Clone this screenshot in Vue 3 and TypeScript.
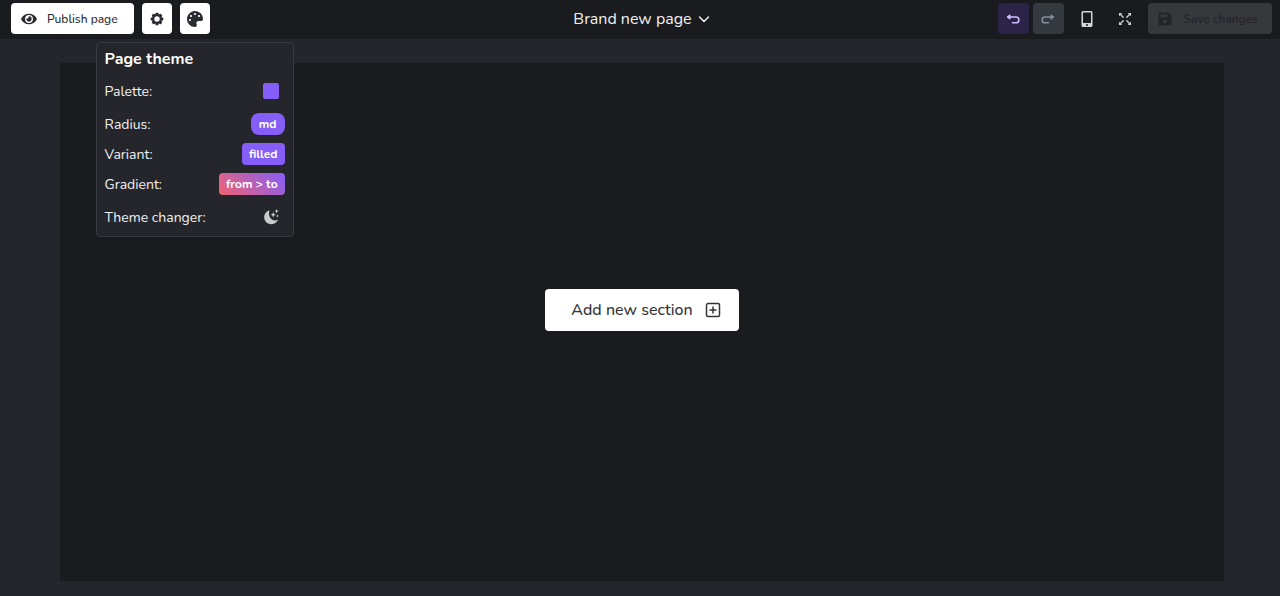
<script setup lang="ts">
import { ref } from 'vue'

const pageName = ref('Brand new page')
const themeOpen = ref(true)

const options = [
  { label: 'Radius:', value: 'md', kind: 'round' },
  { label: 'Variant:', value: 'filled', kind: 'filled' },
  { label: 'Gradient:', value: 'from > to', kind: 'gradient' },
]
</script>

<template>
  <div class="editor">
    <header class="topbar">
      <div class="group">
        <button class="btn publish" type="button">
          <svg class="eye" viewBox="0 0 576 512" aria-hidden="true">
            <path fill="currentColor" d="M572.5 241.400C518.300 135.600 410.900 64 288 64S57.700 135.600 3.500 241.400a32.350 32.350 0 0 0 0 29.200C57.700 376.400 165.100 448 288 448s230.300-71.600 284.500-177.400a32.350 32.350 0 0 0 0-29.200zM288 400a144 144 0 1 1 144-144 143.930 143.930 0 0 1-144 144zm0-240a95.300 95.300 0 0 0-25.300 3.800 47.850 47.850 0 0 1-66.900 66.900A95.800 95.800 0 1 0 288 160z" />
          </svg>
          <span>Publish page</span>
        </button>
        <button class="btn square" type="button" aria-label="Page settings">
          <svg class="gear" viewBox="0 0 16 16" aria-hidden="true">
            <g fill="currentColor">
              <rect v-for="n in 4" :key="n" x="6.200" y="0.800" width="3.600" height="14.400" rx="1" :transform="`rotate(${n * 45} 8 8)`" />
              <circle cx="8" cy="8" r="5.700" />
            </g>
            <circle cx="8" cy="8" r="3.100" fill="#fff" />
          </svg>
        </button>
        <div class="anchor">
          <button class="btn square" type="button" aria-label="Page theme" :aria-expanded="themeOpen" @click="themeOpen = !themeOpen">
            <svg class="palette" viewBox="0 0 512 512" aria-hidden="true">
              <path fill="currentColor" d="M204.300 5C104.900 24.400 24.800 104.300 5.200 203.400c-37 187 131.700 326.400 258.800 306.700 41.200-6.400 61.400-54.600 42.500-91.700-23.100-45.400 9.900-98.400 60.900-98.400h79.700c35.800 0 64.800-29.600 64.900-65.300C511.500 97.100 368.100-26.900 204.300 5zM96 320c-17.700 0-32-14.300-32-32s14.300-32 32-32 32 14.300 32 32-14.300 32-32 32zm32-128c-17.700 0-32-14.300-32-32s14.300-32 32-32 32 14.300 32 32-14.300 32-32 32zm128-64c-17.700 0-32-14.300-32-32s14.300-32 32-32 32 14.300 32 32-14.300 32-32 32zm128 64c-17.700 0-32-14.300-32-32s14.300-32 32-32 32 14.300 32 32-14.300 32-32 32z" />
            </svg>
          </button>
          <section v-if="themeOpen" class="popover" aria-label="Page theme">
            <h2>Page theme</h2>
            <div class="row tall">
              <span>Palette:</span>
              <button class="mini" type="button" aria-label="Choose palette"><i class="swatch"></i></button>
            </div>
            <div v-for="item in options" :key="item.label" class="row">
              <span>{{ item.label }}</span>
              <button class="chip" :class="item.kind" type="button">{{ item.value }}</button>
            </div>
            <div class="row tall">
              <span>Theme changer:</span>
              <button class="mini" type="button" aria-label="Change theme">
                <svg viewBox="0 0 16 16" aria-hidden="true">
                  <path fill="currentColor" d="M6.600 1.200A7.100 7.100 0 1 0 15 10.400 4.900 4.900 0 0 1 12 11.400C8 11.400 4.600 6.600 6.600 1.200z" />
                  <path fill="currentColor" d="M10.200 3l.8 1.900 1.900.8-1.900.8-.8 1.900-.8-1.900-1.900-.8 1.900-.8zM13.600 0l.6 1.500 1.500.6-1.500.6-.6 1.500-.6-1.500-1.500-.6 1.500-.6zM14.400 5.500l.4 1.100 1.100.4-1.100.4-.4 1.100-.4-1.100-1.100-.4 1.100-.4z" />
                </svg>
              </button>
            </div>
          </section>
        </div>
      </div>

      <button class="title" type="button">
        <span>{{ pageName }}</span>
        <svg viewBox="0 0 12 12" aria-hidden="true">
          <path d="M1.500 4L6 8.500 10.500 4" fill="none" stroke="currentColor" stroke-width="1.500" stroke-linecap="round" stroke-linejoin="round" />
        </svg>
      </button>

      <div class="group tools">
        <div class="history">
          <button class="btn square undo" type="button" aria-label="Undo">
            <svg viewBox="0 0 16 16" aria-hidden="true">
              <path d="M4 6h7a2.900 2.900 0 0 1 0 5.800H7.500" fill="none" stroke="currentColor" stroke-width="1.500" stroke-linecap="round" />
              <path d="M5 3.800v4.400L2 6z" fill="currentColor" stroke="currentColor" stroke-linejoin="round" />
            </svg>
          </button>
          <button class="btn square redo" type="button" aria-label="Redo">
            <svg viewBox="0 0 16 16" aria-hidden="true">
              <path d="M12 6H5a2.900 2.900 0 0 0 0 5.800h3.500" fill="none" stroke="currentColor" stroke-width="1.500" stroke-linecap="round" />
              <path d="M11 3.800v4.400L14 6z" fill="currentColor" stroke="currentColor" stroke-linejoin="round" />
            </svg>
          </button>
        </div>
        <button class="btn square plain" type="button" aria-label="Mobile preview">
          <svg class="phone" viewBox="0 0 12 18" aria-hidden="true">
            <path fill="currentColor" fill-rule="evenodd" d="M2 1h8a1.500 1.500 0 0 1 1.500 1.500v13A1.500 1.500 0 0 1 10 17H2a1.500 1.500 0 0 1-1.500-1.500v-13A1.500 1.500 0 0 1 2 1zM2 2.500V13h8V2.500zM6 14a1 1 0 1 0 0 2 1 1 0 0 0 0-2z" />
          </svg>
        </button>
        <button class="btn square plain" type="button" aria-label="Full screen">
          <svg class="expand" viewBox="0 0 14 14" aria-hidden="true">
            <path d="M2 2l3.200 3.200M12 2L8.800 5.200M2 12l3.200-3.200M12 12L8.800 8.800" fill="none" stroke="currentColor" stroke-width="1.300" stroke-linecap="round" />
            <path fill="currentColor" d="M1 1h3.200L1 4.200zM13 1v3.200L9.800 1zM1 13V9.800L4.200 13zM13 13H9.800L13 9.800z" />
          </svg>
        </button>
        <button class="btn save" type="button" disabled>
          <svg viewBox="0 0 14 14" aria-hidden="true">
            <path fill="currentColor" fill-rule="evenodd" d="M2 .5h8.500l3 3V12a1.500 1.500 0 0 1-1.500 1.500H2A1.500 1.500 0 0 1 .5 12V2A1.500 1.500 0 0 1 2 .5zM2.500 2.500v3h7v-3zM7 7.500a2 2 0 1 0 0 4 2 2 0 0 0 0-4z" />
          </svg>
          <span>Save changes</span>
        </button>
      </div>
    </header>

    <main class="workspace">
      <div class="canvas">
        <button class="add" type="button">
          <span>Add new section</span>
          <svg viewBox="0 0 16 16" aria-hidden="true">
            <path d="M3 1.500h10A1.500 1.500 0 0 1 14.500 3v10a1.500 1.500 0 0 1-1.500 1.500H3A1.500 1.500 0 0 1 1.500 13V3A1.500 1.500 0 0 1 3 1.500zM8 5v6M5 8h6" fill="none" stroke="currentColor" stroke-width="1.500" stroke-linecap="round" />
          </svg>
        </button>
      </div>
    </main>
  </div>
</template>

<style>
body {
  margin: 0;
  background: #25262b;
}
</style>

<style scoped>
.editor {
  display: flex;
  flex-direction: column;
  min-height: 100vh;
  background: #25262b;
  color: #f1f1f2;
  font-family: Nunito, Lato, sans-serif;
  font-size: 14px;
}
button {
  margin: 0;
  padding: 0;
  border: 0;
  background: none;
  color: inherit;
  font: inherit;
  white-space: nowrap;
}
svg {
  display: block;
  flex: none;
  width: 16px;
  height: 16px;
}
.topbar {
  display: grid;
  grid-template-columns: 1fr auto 1fr;
  align-items: center;
  box-sizing: border-box;
  height: 39px;
  padding: 0 8px 2px 11px;
  background: #1a1b1e;
}
.group {
  display: flex;
  align-items: center;
  gap: 8px;
}
.tools {
  justify-content: flex-end;
}
.history {
  display: flex;
  gap: 4px;
}
.btn {
  display: flex;
  align-items: center;
  justify-content: center;
  box-sizing: border-box;
  height: 31px;
  border-radius: 4px;
  background: #fff;
  color: #2b2c31;
  font-size: 12px;
  font-weight: 500;
}
.square {
  width: 30px;
}
.publish {
  gap: 10px;
  padding: 0 16px 0 10px;
}
.eye {
  width: 16px;
  height: 14px;
}
.gear {
  width: 14px;
  height: 14px;
}
.undo,
.redo {
  width: 31px;
}
.undo {
  background: #2c2348;
  color: #d0bfff;
}
.redo {
  background: #343a40;
  color: #868e96;
}
.plain {
  background: transparent;
  color: #d5d6d8;
}
.phone {
  width: 12px;
  height: 18px;
}
.expand {
  width: 14px;
  height: 14px;
}
.save {
  gap: 12px;
  padding: 0 14px 0 10px;
  background: #37383c;
  color: #232428;
}
.save svg {
  width: 14px;
  height: 14px;
}
.title {
  display: flex;
  align-items: center;
  gap: 6px;
  font-size: 16px;
}
.title svg {
  width: 12px;
  height: 12px;
}
.anchor {
  position: relative;
}
.popover {
  position: absolute;
  z-index: 2;
  top: 39px;
  left: 50%;
  transform: translateX(-50%);
  display: flex;
  flex-direction: column;
  gap: 8px;
  box-sizing: border-box;
  width: 198px;
  padding: 6px 8px 5px;
  border: 1px solid #373a40;
  border-radius: 4px;
  background: #25262b;
}
.popover h2 {
  margin: 0;
  color: #fff;
  font-size: 16px;
  font-weight: 700;
  line-height: 20px;
}
.row {
  display: flex;
  align-items: center;
  justify-content: space-between;
  height: 22px;
}
.tall {
  height: 28px;
}
.mini {
  display: grid;
  place-items: center;
  width: 28px;
  height: 28px;
  color: #c9cacd;
}
.swatch {
  width: 16px;
  height: 16px;
  border-radius: 2px;
  background: #845ef7;
}
.chip {
  height: 22px;
  padding: 0 7px;
  border-radius: 4px;
  background: #845ef7;
  color: #fff;
  font-size: 12px;
  font-weight: 700;
}
.round {
  padding: 0 8px;
  border-radius: 8px;
}
.gradient {
  background: linear-gradient(45deg, #f06371 0%, #845ef7 100%);
}
.workspace {
  display: flex;
  flex: 1;
  padding: 24px 56px 15px 60px;
}
.canvas {
  display: flex;
  flex: 1;
  align-items: center;
  justify-content: center;
  padding-bottom: 24px;
  background: #1a1b1e;
}
.add {
  display: flex;
  align-items: center;
  justify-content: center;
  gap: 12px;
  height: 42px;
  padding: 0 18px 0 26px;
  border-radius: 4px;
  background: #fff;
  color: #343539;
  font-size: 16px;
  font-weight: 500;
}
</style>
